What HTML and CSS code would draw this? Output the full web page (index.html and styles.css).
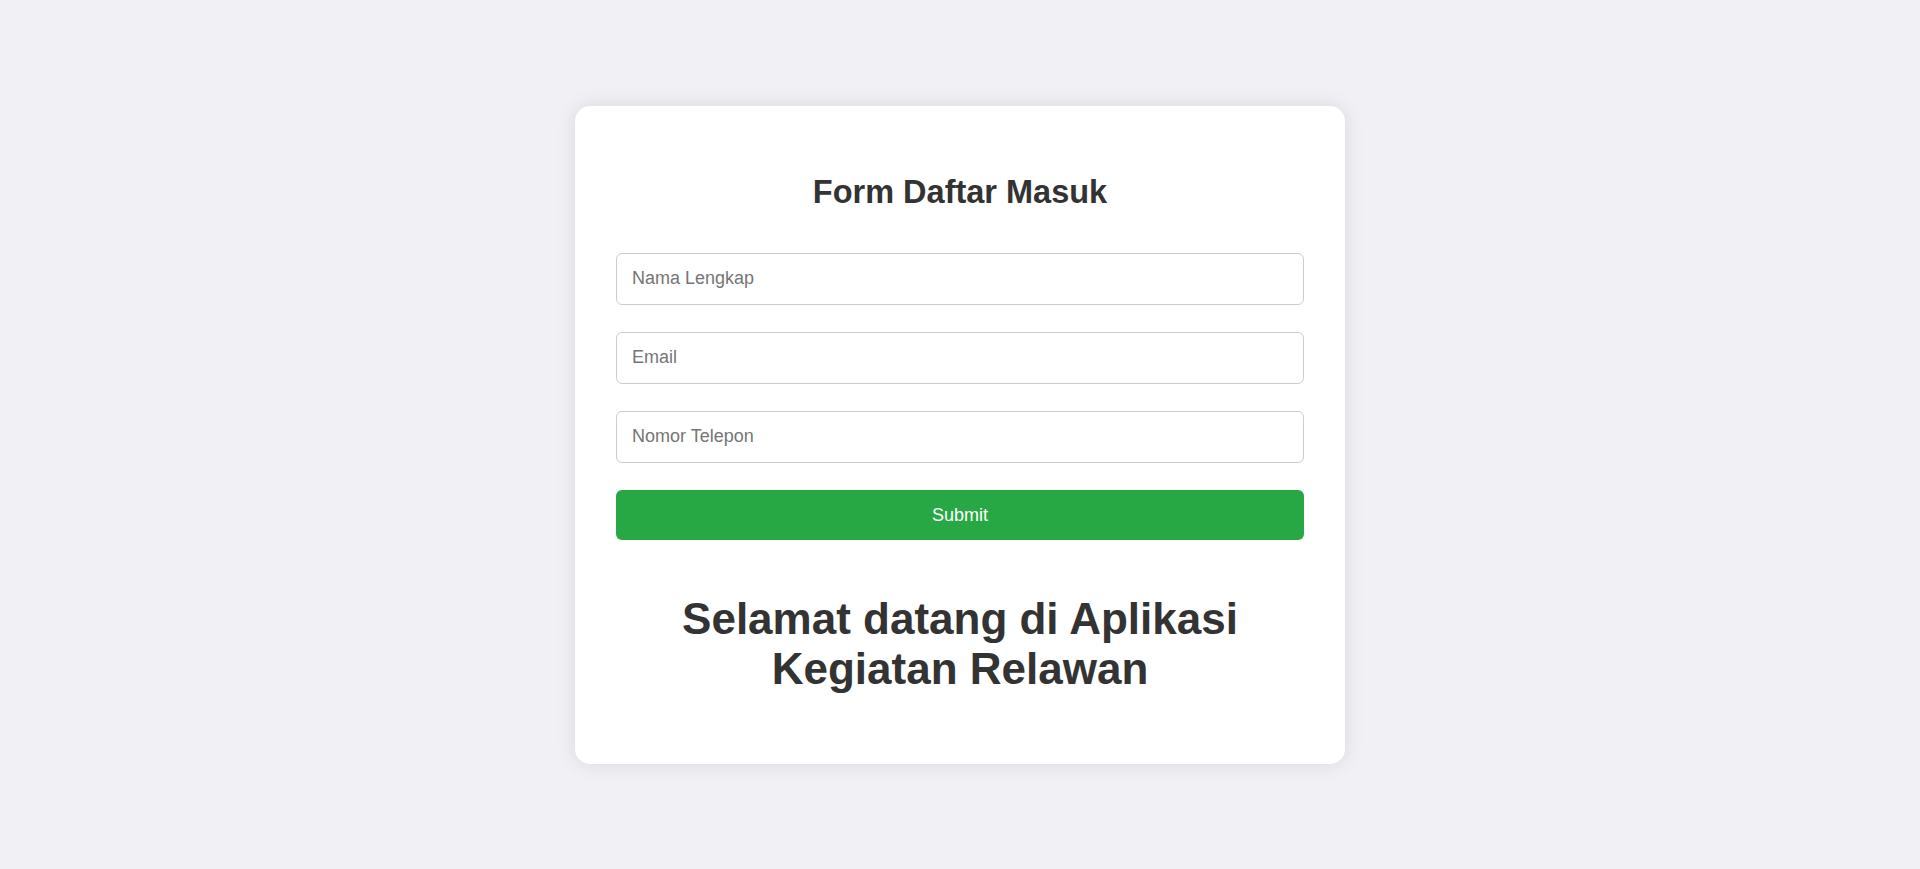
FILE: index.html
```html
<!DOCTYPE html>
<html lang="id">
<head>
<meta charset="utf-8">
<title>Form Daftar Masuk</title>
<link rel="stylesheet" href="styles.css">
</head>
<body>
<div class="card">
  <h2 class="form-title">Form Daftar Masuk</h2>
  <form class="form">
    <input class="field" type="text" placeholder="Nama Lengkap">
    <input class="field" type="email" placeholder="Email">
    <input class="field" type="tel" placeholder="Nomor Telepon">
    <button class="submit" type="button">Submit</button>
  </form>
  <h1 class="welcome">Selamat datang di Aplikasi<br>Kegiatan Relawan</h1>
</div>
</body>
</html>
```

FILE: styles.css
```css
html, body {
  margin: 0;
  padding: 0;
}
body {
  min-height: 100vh;
  background: #f0f0f5;
  font-family: "Liberation Sans", Arial, sans-serif;
  color: #333333;
  display: flex;
  align-items: center;
  justify-content: center;
}
.card {
  width: 770px;
  box-sizing: border-box;
  padding: 41px;
  background: #ffffff;
  border-radius: 15px;
  box-shadow: 0 0 20px rgba(0, 0, 0, 0.1);
}
.form-title {
  margin: 27px 0 43px;
  font-size: 32.5px;
  line-height: 36px;
  font-weight: bold;
  text-align: center;
  color: #333333;
}
.form {
  display: flex;
  flex-direction: column;
  gap: 27px;
  margin: 0;
}
.field {
  display: block;
  width: 100%;
  box-sizing: border-box;
  height: 52px;
  padding: 15px;
  border: 1px solid #cccccc;
  border-radius: 6px;
  font-family: "Liberation Sans", Arial, sans-serif;
  font-size: 18px;
  line-height: 20px;
  color: #333333;
  background: #ffffff;
  outline: none;
}
.field::placeholder {
  color: #757575;
}
.submit {
  display: block;
  width: 100%;
  height: 50px;
  border: none;
  border-radius: 6px;
  background: #28a745;
  color: #ffffff;
  font-family: "Liberation Sans", Arial, sans-serif;
  font-size: 18px;
  line-height: 20px;
  cursor: pointer;
}
.welcome {
  margin: 54px 0 29px;
  font-size: 44px;
  line-height: 50px;
  font-weight: bold;
  text-align: center;
  color: #333333;
}
```
